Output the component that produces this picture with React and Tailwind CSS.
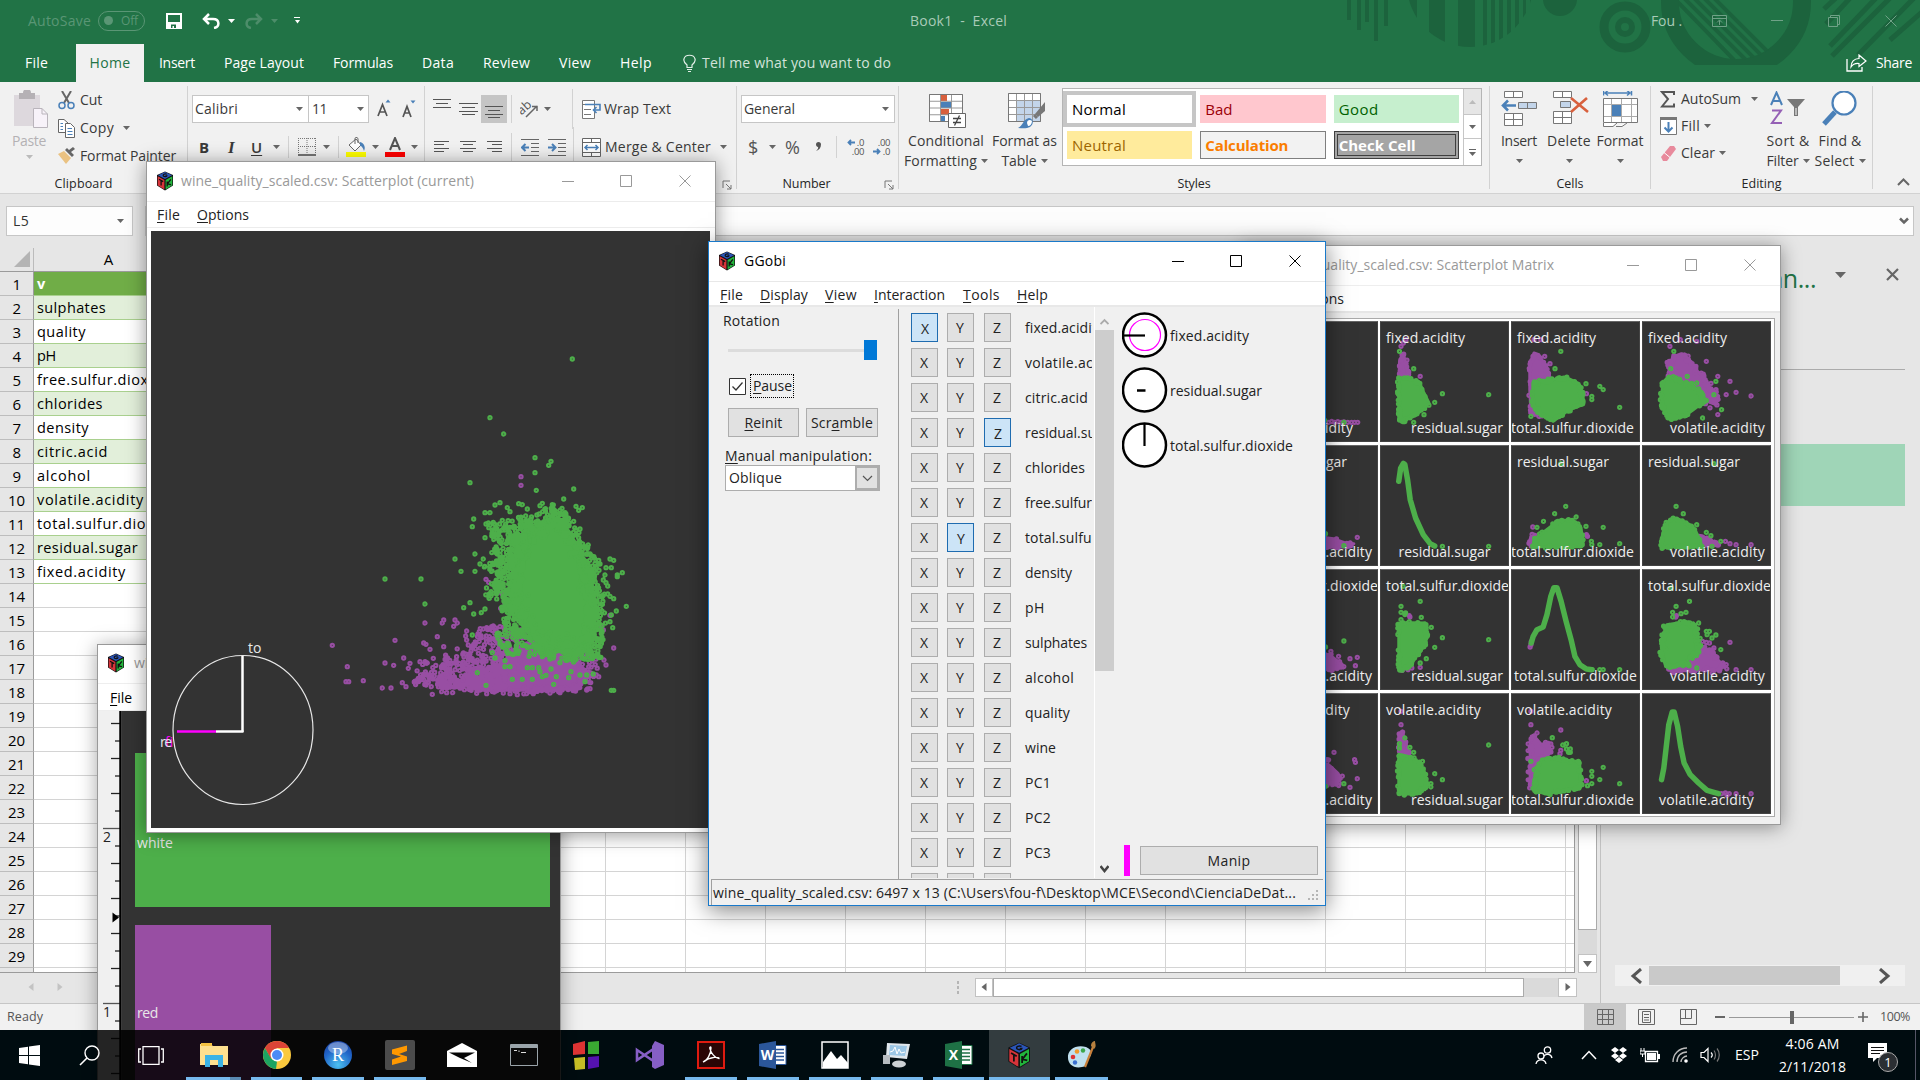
import React, { useLayoutEffect, useRef, useState } from "react";

/* ---------- text fitted to a given advance width ---------- */
function T({ w, children, className = "" }) {
  const ref = useRef(null);
  const [ls, setLs] = useState(0);
  const text = String(children);
  const i = text.indexOf("_^");
  useLayoutEffect(() => {
    const el = ref.current;
    el.style.letterSpacing = "0px";
    const n = el.textContent.length;
    const v = (w - el.getBoundingClientRect().width) / n;
    el.style.letterSpacing = v + "px";
    setLs(v);
  }, [w, text]);
  const body =
    i < 0 ? text : (
      <>
        {text.slice(0, i)}
        <span className="underline underline-offset-2">{text[i + 2]}</span>
        {text.slice(i + 3)}
      </>
    );
  return (
    <span className={"inline-block shrink-0 whitespace-pre " + className} style={{ width: w }}>
      <span ref={ref} style={{ letterSpacing: ls }}>{body}</span>
    </span>
  );
}

const Caret = ({ className = "ml-0 text-[#666]" }) => (
  <svg width="7" height="4" viewBox="0 0 7 4" className={"shrink-0 " + className}>
    <path d="M0 0H7L3.5 4Z" fill="currentColor" />
  </svg>
);
const Svg = ({ w, h, className = "", children }) => (
  <svg width={w} height={h} viewBox={`0 0 ${w} ${h}`} fill="none" className={"shrink-0 " + className}>
    {children}
  </svg>
);
const Sep = ({ className = "h-[34px]" }) => <div className={"w-px shrink-0 bg-[#d2d2d2] " + className} />;

function Cube({ size = 20, className = "" }) {
  return (
    <svg width={size * 0.9} height={size} viewBox="0 0 18 20" className={"shrink-0 " + className}>
      <path d="M9 0.5L17 4V14.5L9 19.5L1 14.5V4Z" fill="#111" />
      <path d="M9 1L16 4.2L9 8L2 4.2Z" fill="#2b55b8" />
      <path d="M1.7 5.2L8.4 8.9V18.4L1.7 14.2Z" fill="#d8343a" />
      <path d="M16.3 5.2L9.6 8.9V18.4L16.3 14.2Z" fill="#22b53c" />
      <path d="M10.8 3.2C9 2.4 6.3 3.4 7.4 5C8.4 6 11 5.8 11 4.8H9.4" stroke="#111" strokeWidth="1.1" fill="none" />
      <path d="M3 8.2L7.2 10.6M5.1 9.6V14.4" stroke="#111" strokeWidth="1.3" fill="none" />
      <path d="M11.2 10.4V15.6M14.8 8.4L11.4 12.8L15 13.6" stroke="#111" strokeWidth="1.3" fill="none" />
    </svg>
  );
}

/* ---------- header decoration ---------- */
function HeaderArt() {
  return (
    <svg width="620" height="82" viewBox="1300 0 620 82" className="absolute right-0 top-0" fill="#1c633d">
      <path d="M1347 0h4v20h-4zM1357 0h4v30h-4zM1365 0h4v22h-4zM1374 0h4v41h-4zM1384 0h4v26h-4z" />
      <clipPath id="disc"><circle cx="1470" cy="-16" r="63" /></clipPath>
      <g clipPath="url(#disc)">
        <path d="M1407 0h10v60h-10zM1429 0h16v60h-16zM1458 0h17v60h-17zM1483 0h4v60h-4zM1491 0h4v60h-4zM1499 0h4v60h-4zM1507 0h4v60h-4zM1515 0h4v60h-4zM1523 0h3v60h-3zM1530 0h3v60h-3z" />
      </g>
      <circle cx="1560" cy="-1" r="17" />
      <circle cx="1625" cy="27" r="21" fill="none" stroke="#1c633d" strokeWidth="9" />
      <circle cx="1625" cy="27" r="7" fill="none" stroke="#1c633d" strokeWidth="6" />
      <clipPath id="cutArc"><path d="M1600 0h300v65h-300z" /></clipPath>
      <g clipPath="url(#cutArc)">
        <circle cx="1736" cy="2" r="66" fill="none" stroke="#1c633d" strokeWidth="18" />
      </g>
      <clipPath id="innerArc"><circle cx="1736" cy="2" r="58" /></clipPath>
      <g clipPath="url(#innerArc)" stroke="#1c633d" strokeWidth="4">
        <path d="M1672 -4L1736 62M1682 -4L1748 62M1692 -4L1758 62M1702 -4L1768 62M1712 -4L1778 62" />
      </g>
      <g stroke="#1c633d" strokeWidth="5">
        <path d="M1838 -4L1824 9M1852 -4L1826 24M1878 -4L1830 46M1892 -4L1832 56M1916 -4L1858 55M1922 12L1890 40" />
      </g>
    </svg>
  );
}

/* ---------- Excel ribbon ---------- */
const Group = ({ w, label, lw, children, launcher, lp = "" }) => (
  <div className="flex h-[111px] shrink-0" style={{ width: w }}>
    <div className="min-w-0 flex-1">
      <div className="h-[92px]">{children}</div>
      <div className={"relative flex h-[20px] items-center justify-center pt-px text-[12.5px] text-[#262626] " + lp}>
        <T w={lw}>{label}</T>
        {launcher && (
          <Svg w={10} h={10} className="absolute right-[4px]">
            <path d="M1 8V1H8M4 4L9 9M9 5V9H5" stroke="#777" />
          </Svg>
        )}
      </div>
    </div>
    <Sep className="mt-1 h-[103px]" />
  </div>
);

const Big = ({ className, icon, a, aw, b, bw }) => (
  <div className={"flex shrink-0 flex-col items-center pt-[9px] " + className}>
    <div className="flex h-[38px] items-start justify-center">{icon}</div>
    <div className="mt-[2px] flex h-[20px] items-center"><T w={aw}>{a}</T></div>
    <div className="flex h-[20px] items-center">
      {b && <T w={bw}>{b}</T>}
      <Caret className={b ? "ml-[4px] text-[#666]" : "text-[#666]"} />
    </div>
  </div>
);

const Lines = ({ w, ys, xs }) => (
  <Svg w={w} h={18}>
    {ys.map((y, i) => (
      <path key={i} d={`M${xs[i][0]} ${y + 0.5}H${xs[i][1]}`} stroke="#555" />
    ))}
  </Svg>
);

function Ribbon() {
  const grid = (x, y, cw, ch, nx, ny) => {
    let d = "";
    for (let i = 0; i <= nx; i++) d += `M${x + i * cw} ${y}v${ch * ny}`;
    for (let j = 0; j <= ny; j++) d += `M${x} ${y + j * ch}h${cw * nx}`;
    return d;
  };
  return (
    <div className="flex h-[112px] shrink-0 border-b border-[#d2d2d2] bg-[#f1f1f1] text-[14px] text-[#3a3a3a]">
      <Group w={188} label="Clipboard" lw={58} lp="pr-[20px]">
        <div className="flex pt-[4px]">
          <div className="flex w-[58px] flex-col items-center pt-[4px] text-[#b4b1b4]">
            <Svg w={36} h={38} className="ml-[4px]">
              <path d="M1 5H27V36H1Z" fill="#ddd8dd" />
              <path d="M6 3h4a4 4 0 0 1 8 0h4v6H6z" fill="#b5b1b5" />
              <path d="M20.500 18.500H29L34.500 24V37.500H20.500Z" fill="#f7f2f9" stroke="#b9b4bb" />
              <path d="M29 18.500V24H34.500" stroke="#b9b4bb" />
            </Svg>
            <T w={34} className="mt-[6px]">Paste</T>
            <Caret className="mt-[7px] text-[#bbb]" />
          </div>
          <div>
            <div className="flex h-[28px] items-center">
              <Svg w={17} h={19}>
                <path d="M4 0L11 12M13 0L6 12" stroke="#666" strokeWidth="2" />
                <circle cx="4" cy="14.500" r="3" stroke="#4a80b8" strokeWidth="1.500" />
                <circle cx="13" cy="14.500" r="3" stroke="#4a80b8" strokeWidth="1.500" />
              </Svg>
              <T w={22} className="ml-[5px]">Cut</T>
            </div>
            <div className="flex h-[28px] items-center">
              <Svg w={17} h={19}>
                <path d="M0.500 0.500H6L10 4V13.500H0.500Z" stroke="#666" fill="#fff" />
                <path d="M7.500 4.500H12.500L16.500 8.500V18.500H7.500Z" stroke="#666" fill="#fff" />
                <path d="M2.500 4.500H5M2.500 7.500H5M2.500 10.500H5M9.500 9.500H14M9.500 12.500H14.500M9.500 15.500H14.500" stroke="#4a80b8" />
              </Svg>
              <T w={34} className="ml-[5px]">Copy</T>
              <Caret className="ml-[9px] text-[#666]" />
            </div>
            <div className="flex h-[28px] items-center">
              <Svg w={18} h={18}>
                <path d="M0 7L6 4L13 11L8 17Z" fill="#eac282" />
                <path d="M7 3L14 10L16 8L13 5L17 2L15 0L11 3L9 1Z" fill="#666" />
              </Svg>
              <T w={96} className="ml-[4px]">Format Painter</T>
            </div>
          </div>
        </div>
      </Group>

      <Group w={237} label="Font" lw={26} launcher>
        <div className="flex flex-col gap-[10px] pt-[13px]">
          <div className="flex h-[28px] items-center">
            <div className="ml-[4px] flex h-[28px] w-[117px] shrink-0 items-center border border-[#c6c6c6] bg-white pl-[2px]">
              <T w={43}>Calibri</T>
              <Caret className="ml-[58px] text-[#666]" />
            </div>
            <div className="-ml-px flex h-[28px] w-[61px] shrink-0 items-center border border-[#c6c6c6] bg-white pl-[3px]">
              <T w={15}>11</T>
              <Caret className="ml-[30px] text-[#666]" />
            </div>
            <Svg w={16} h={20} className="ml-[8px]">
              <path d="M1 17L5.500 5.500L10 17M2.500 13H8.500" stroke="#555" strokeWidth="1.700" />
              <path d="M8.500 3.500L11 0.500L13.500 3.500Z" fill="#4a80b8" />
            </Svg>
            <Svg w={16} h={20} className="ml-[9px]">
              <path d="M1 18L5 7.500L9 18M2.500 14H7.500" stroke="#555" strokeWidth="1.700" />
              <path d="M8.500 1.500L11 4.500L13.500 1.500Z" fill="#4a80b8" />
            </Svg>
          </div>
          <div className="flex h-[28px] items-center">
            <T w={10} className="ml-[11px] text-[15px] font-bold">B</T>
            <span className="ml-[19px] w-[9px] font-['Liberation_Serif',serif] text-[17px] font-bold italic">I</span>
            <span className="ml-[14px] w-[12px] text-[15px] font-semibold underline underline-offset-2">U</span>
            <Caret className="ml-[10px] text-[#666]" />
            <Sep className="ml-[8px] h-[22px]" />
            <Svg w={18} h={18} className="ml-[9px]">
              <path d="M0 0.500H18M0.500 0V16M17.500 0V16M9 0V16M0 8.500H18" stroke="#777" strokeDasharray="1 1" />
              <path d="M0 17H18" stroke="#555" strokeWidth="1.600" />
            </Svg>
            <Caret className="ml-[7px] text-[#666]" />
            <Sep className="ml-[8px] h-[22px]" />
            <Svg w={20} h={20} className="ml-[7px]">
              <path d="M3 8L10 2L15 8L9 14Z" fill="#fff" stroke="#666" />
              <path d="M9 7V1.500C9 0 12 0 12 2V6" stroke="#666" />
              <path d="M14 5C18 6 20 10 18 14C17 11 16 9 14 9Z" fill="#4a80b8" />
              <path d="M0 15H20V20H0Z" fill="#ff0" />
            </Svg>
            <Caret className="ml-[6px] text-[#666]" />
            <Svg w={20} h={20} className="ml-[6px]">
              <path d="M5 13L10 1L15 13M7 9H13" stroke="#555" strokeWidth="2" />
              <path d="M0 15H20V20H0Z" fill="#f00" />
            </Svg>
            <Caret className="ml-[6px] text-[#666]" />
          </div>
        </div>
      </Group>

      <Group w={312} label="Alignment" lw={60} launcher>
        <div className="flex flex-col gap-[10px] pt-[13px]">
          <div className="flex h-[28px] items-center">
            <div className="mb-[10px] ml-[8px]"><Lines w={18} ys={[4, 8, 12]} xs={[[0, 18], [3, 15], [0, 18]]} /></div>
            <div className="ml-[8px]"><Lines w={19} ys={[3, 7, 11, 14]} xs={[[0, 19], [3, 16], [0, 19], [3, 16]]} /></div>
            <div className="ml-[3px] flex h-[28px] w-[26px] items-center justify-center bg-[#c5c5c5] pt-[6px]">
              <Lines w={18} ys={[3, 7, 11, 14]} xs={[[0, 18], [3, 15], [0, 18], [3, 15]]} />
            </div>
            <Sep className="ml-[4px] h-[28px]" />
            <Svg w={19} h={18} className="ml-[8px]">
              <path d="M6 17L17 6M12 6.500H17V11" stroke="#666" strokeWidth="1.500" />
              <text x="-1" y="11" fontSize="12.500" fill="#555" transform="rotate(-42 6 10)" className="font-['Open_Sans',sans-serif]">ab</text>
            </Svg>
            <Caret className="ml-[5px] text-[#666]" />
            <Sep className="ml-[21px] h-[40px]" />
            <Svg w={20} h={19} className="ml-[9px]">
              <path d="M0.500 0.500H12.500V18.500H0.500Z" fill="#fff" stroke="#777" />
              <path d="M0 4.500H13M2 9.500H9M2 14.500H9" stroke="#777" />
              <path d="M3 4.500H18V10H12M14.500 7L11.500 10L14.500 13" stroke="#4a80b8" strokeWidth="1.600" />
            </Svg>
            <T w={67} className="ml-[2px]">Wrap Text</T>
          </div>
          <div className="flex h-[28px] items-center">
            <div className="ml-[9px]"><Lines w={15} ys={[3, 6, 10, 13]} xs={[[0, 15], [0, 10], [0, 15], [0, 10]]} /></div>
            <div className="ml-[11px]"><Lines w={16} ys={[3, 6, 10, 13]} xs={[[0, 16], [3, 13], [0, 16], [3, 13]]} /></div>
            <div className="ml-[11px]"><Lines w={15} ys={[3, 6, 10, 13]} xs={[[0, 15], [5, 15], [0, 15], [5, 15]]} /></div>
            <Sep className="ml-[9px] h-[28px]" />
            {[0, 1].map((k) => (
              <Svg key={k} w={18} h={17} className="ml-[9px]">
                <path d="M0 0.500H18M10 4.500H18M10 8.500H18M10 12.500H18M0 16.500H18" stroke="#666" />
                <path d={k ? "M0 8.500H7M4 5L7.500 8.500L4 12" : "M8 8.500H1M4.500 5L1 8.500L4.500 12"} stroke="#4a80b8" strokeWidth="2" />
              </Svg>
            ))}
            <Sep className="ml-[7px] h-[40px]" />
            <Svg w={19} h={19} className="ml-[8px]">
              <path d="M0.500 0.500H18.500V18.500H0.500ZM0 4.500H19M0 14.500H19M9.500 0V4M9.500 15V19" stroke="#666" fill="#fff" />
              <path d="M3 9.500H16M5.500 7L3 9.500L5.500 12M13.500 7L16 9.500L13.500 12" stroke="#4a80b8" strokeWidth="1.500" />
            </Svg>
            <T w={106} className="ml-[4px]">Merge &amp; Center</T>
            <Caret className="ml-[9px] text-[#666]" />
          </div>
        </div>
      </Group>

      <Group w={162} label="Number" lw={48} launcher lp="pr-[22px]">
        <div className="flex flex-col gap-[10px] pt-[13px]">
          <div className="ml-[4px] flex h-[28px] w-[154px] items-center border border-[#c6c6c6] bg-white pl-[2px]">
            <T w={51}>General</T>
            <Caret className="ml-[87px] text-[#666]" />
          </div>
          <div className="flex h-[28px] items-center text-[#555]">
            <T w={11} className="ml-[11px] text-[18px]">$</T>
            <Caret className="ml-[10px] text-[#666]" />
            <T w={16} className="ml-[9px] text-[18px]">%</T>
            <Svg w={7} h={12} className="ml-[14px]">
              <path d="M1 3.500a2.500 2.500 0 1 1 5 0C6 7 4 9 1 10C3 8 3.500 7 3 6C2 6 1 5 1 3.500" fill="#555" />
            </Svg>
            <Sep className="ml-[14px] h-[22px]" />
            <div className="ml-[10px] w-[17px] text-[9.5px] leading-[9px] tracking-[-0.4px]">
              <div className="flex items-center justify-between"><Svg w={8} h={7}><path d="M8 3.500H1.500M4 1L1.500 3.500L4 6" stroke="#4a80b8" strokeWidth="1.800" /></Svg>.0</div>
              <div className="text-right">.00</div>
            </div>
            <div className="ml-[9px] w-[17px] text-[9.5px] leading-[9px] tracking-[-0.4px]">
              <div className="text-right">.00</div>
              <div className="flex items-center justify-between"><Svg w={8} h={7}><path d="M0 3.500H6.500M4 1L6.500 3.500L4 6" stroke="#4a80b8" strokeWidth="1.800" /></Svg>.0</div>
            </div>
          </div>
        </div>
      </Group>

      <Group w={591} label="Styles" lw={33}>
        <div className="flex">
          <Big className="ml-[5px] w-[84px]" a="Conditional" aw={76} b="Formatting" bw={73}
            icon={
              <Svg w={38} h={36} className="ml-[4px] mt-[3px]">
                <path d="M0.500 0.500H33.500V27.500H0.500Z" fill="#fff" />
                <path d="M11 1h7v6h-7zM11 15h9v6h-9z" fill="#d8603d" />
                <path d="M11 8h11v6H11zM11 22h5v6h-5z" fill="#4a80b8" />
                <path d={grid(0.5, 0.5, 11, 6.75, 3, 4)} stroke="#999" />
                <path d="M0.500 0.500H33.500V27.500H0.500Z" stroke="#777" />
                <path d="M19.500 19.500H36.500V33.500H19.500Z" fill="#fff" stroke="#666" />
                <path d="M24 24.500H32M24 28.500H32M30.500 21.500L25.500 31.500" stroke="#444" strokeWidth="1.300" />
              </Svg>
            } />
          <Big className="ml-[4px] w-[65px]" a="Format as" aw={65} b="Table" bw={35}
            icon={
              <Svg w={38} h={37} className="ml-[5px] mt-[2px]">
                <path d="M0.500 0.500H32.500V28.500H0.500Z" fill="#fff" />
                <path d="M9 8H33V29H9Z" fill="#c3d5ea" />
                <path d={grid(0.5, 0.5, 8, 7, 4, 4)} stroke="#999" />
                <path d="M0.500 0.500H32.500V28.500H0.500Z" stroke="#777" />
                <path d="M37 9V18L30 24L27 21Z" fill="#777" />
                <path d="M26 22L29 25" stroke="#777" strokeWidth="3" />
                <path d="M10 35C15 33 15 26 21 25C26 26 26 31 22 34C18 36 14 35 10 35" fill="#4a80b8" />
                <path d="M19 30C19 27 22 26 24 28C24 31 22 33 20 33" fill="#fff" />
              </Svg>
            } />
          <div className="ml-[5px] mt-[6px] flex h-[78px] w-[420px] border border-[#b5b5b5] bg-white text-[15px]">
            <div className="grid w-[400px] shrink-0 grid-cols-3 gap-x-[8px] gap-y-[8px] px-[4px] py-[6px]">
              <div className="flex h-[28px] items-center bg-white pl-[5px] text-black outline-4 outline-[#c6c6c6]"><T w={54}>Normal</T></div>
              <div className="flex h-[28px] items-center bg-[#ffc7ce] pl-[5px] text-[#9c0006]"><T w={27}>Bad</T></div>
              <div className="flex h-[28px] items-center bg-[#c6efce] pl-[5px] text-[#006100]"><T w={40}>Good</T></div>
              <div className="flex h-[28px] items-center bg-[#ffeb9c] pl-[5px] text-[#9c6500]"><T w={54}>Neutral</T></div>
              <div className="flex h-[28px] items-center border border-[#7f7f7f] bg-[#f2f2f2] pl-[4px] font-bold text-[#fa7d00]"><T w={83}>Calculation</T></div>
              <div className="flex h-[28px] items-center border-4 border-double border-[#3f3f3f] bg-[#a5a5a5] pl-px font-bold text-white"><T w={77}>Check Cell</T></div>
            </div>
            <div className="flex flex-1 flex-col border-l border-[#c6c6c6]">
              <div className="flex h-[25px] items-center justify-center bg-[#e6e6e6]"><Caret className="rotate-180 text-[#bbb]" /></div>
              <div className="flex h-[25px] items-center justify-center border-y border-[#c6c6c6]"><Caret /></div>
              <div className="flex flex-1 flex-col items-center justify-center gap-[2px]"><div className="h-px w-[7px] bg-[#666]" /><Caret /></div>
            </div>
          </div>
        </div>
      </Group>

      <Group w={161} label="Cells" lw={27}>
        <div className="flex">
          <Big className="ml-[7px] w-[44px]" a="Insert" aw={36}
            icon={
              <Svg w={36} h={36}>
                <path d="M3.500 0.500H21.500V6.500H3.500ZM12.500 0V6M3.500 22.500H21.500V34.500H3.500ZM12.500 22V34M3 28.500H21" stroke="#777" fill="#fff" />
                <path d="M17.500 11.500H35.500V17.500H17.500ZM26.500 11V18" stroke="#777" fill="#c3d5ea" />
                <path d="M15 14.500H2M7 9.500L2 14.500L7 19.500" stroke="#4a80b8" strokeWidth="2.600" />
              </Svg>
            } />
          <Big className="ml-[5px] w-[46px]" a="Delete" aw={44}
            icon={
              <Svg w={36} h={36} className="ml-[3px]">
                <path d="M0.500 0.500H18.500V6.500H0.500ZM9.500 0V6M0.500 20.500H18.500V32.500H0.500ZM9.500 20V32M0 26.500H18" stroke="#777" fill="#fff" />
                <path d="M7.500 10.500H17.500V16.500H7.500Z" stroke="#777" fill="#c3d5ea" />
                <path d="M18 7L35 21M34 7L18 21" stroke="#d8603d" strokeWidth="2.600" />
              </Svg>
            } />
          <Big className="ml-[4px] w-[48px]" a="Format" aw={47}
            icon={
              <Svg w={35} h={38}>
                <path d="M0.500 -1V4.500M28.500 -1V4.500M2 2H27M5 -0.500L2 2L5 4.500M24 -0.500L27 2L24 4.500" stroke="#4a80b8" strokeWidth="1.500" />
                <path d="M0.500 7.500H34.500V31.500H0.500Z" fill="#fff" />
                <path d="M8.500 7V32M18.500 7V32M28.500 7V32M0 13.500H34M0 25.500H34" stroke="#aaa" />
                <path d="M0.500 7.500H34.500V31.500H0.500Z" stroke="#777" />
                <path d="M9 14H18V25H9Z" fill="#4a80b8" />
                <path d="M0.500 32V35.500H10L14 32M13 35.500H19L24 32" stroke="#777" fill="#fff" />
              </Svg>
            } />
        </div>
      </Group>

      <Group w={222} label="Editing" lw={40} lp="">
        <div className="flex">
          <div className="ml-[9px] w-[106px] pt-[4px]">
            <div className="flex h-[26px] items-center">
              <Svg w={16} h={17}><path d="M14 4V1H2L8 8L2 15.500H14V12.500" stroke="#555" strokeWidth="2" /></Svg>
              <T w={60} className="ml-[5px]">AutoSum</T>
              <Caret className="ml-[10px] text-[#666]" />
            </div>
            <div className="flex h-[28px] items-center">
              <Svg w={17} h={18}>
                <path d="M0.500 0.500H16.500V17.500H0.500Z" fill="#fff" stroke="#777" />
                <path d="M0 0H17V3H0Z" fill="#777" />
                <path d="M8.500 5V14M4.500 10.500L8.500 14.500L12.500 10.500" stroke="#4a80b8" strokeWidth="2" />
              </Svg>
              <T w={19} className="ml-[4px]">Fill</T>
              <Caret className="ml-[4px] text-[#666]" />
            </div>
            <div className="flex h-[26px] items-center">
              <Svg w={17} h={17}>
                <path d="M10 1H14L16 4L7 16H3L1 12Z" fill="#e88a9c" />
                <path d="M4 7.500L10 12.500" stroke="#fff" />
              </Svg>
              <T w={34} className="ml-[4px]">Clear</T>
              <Caret className="ml-[4px] text-[#666]" />
            </div>
          </div>
          <Big className="w-[44px]" a="Sort &amp;" aw={43} b="Filter" bw={32}
            icon={
              <Svg w={36} h={36}>
                <path d="M1 14L6.500 1.500L12 14M3 10H10" stroke="#4a80b8" strokeWidth="2" />
                <path d="M2 19.500H11L2 32H12" stroke="#9560b5" strokeWidth="2" />
                <path d="M17 8H35L28 16V25H24V16Z" fill="#777" />
                <path d="M26 17V24" stroke="#fff" />
              </Svg>
            } />
          <Big className="ml-[5px] w-[50px]" a="Find &amp;" aw={43} b="Select" bw={40}
            icon={
              <Svg w={36} h={36}>
                <circle cx="22" cy="12" r="11.500" stroke="#4a80b8" strokeWidth="2.200" fill="#fff" />
                <path d="M13 21L2 33" stroke="#4a80b8" strokeWidth="5" />
              </Svg>
            } />
        </div>
      </Group>
      <div className="flex flex-1 items-end justify-end pb-[6px] pr-[10px]">
        <Svg w={13} h={10}><path d="M1 8L6.500 2.500L12 8" stroke="#666" strokeWidth="2" /></Svg>
      </div>
    </div>
  );
}

function ExcelHeader() {
  return (
    <div className="relative h-[82px] shrink-0 bg-[#217346] text-[14px] text-white">
      <HeaderArt />
      <div className="relative flex h-[44px] items-center pb-[3px]">
        <T w={63} className="ml-[28px] pt-px text-[#5a9675]">AutoSave</T>
        <div className="ml-[7px] flex h-[20px] w-[47px] shrink-0 items-center rounded-full border border-[#5a9675] pl-[5px] text-[12px] text-[#5a9675]">
          <div className="h-[9px] w-[9px] rounded-full bg-[#5a9675]" />
          <T w={17} className="ml-[8px]">Off</T>
        </div>
        <Svg w={16} h={16} className="ml-[21px]">
          <path d="M1 1H15V15H1Z" stroke="#fff" strokeWidth="2" />
          <path d="M1 9H15V16H1Z" fill="#fff" />
          <path d="M5 11.500H10V15H5Z" fill="#217346" /><path d="M6.500 13H8V16H6.500Z" fill="#fff" />
        </Svg>
        <Svg w={18} h={16} className="ml-[20px]">
          <path d="M7 1L2 6L7 11M2 6H11C18 6 18 14 12 15" stroke="#fff" strokeWidth="2.500" />
        </Svg>
        <Caret className="ml-[8px] text-white" />
        <Svg w={18} h={16} className="ml-[10px]">
          <path d="M11 1L16 6L11 11M16 6H7C0 6 0 14 6 15" stroke="#4d8d6a" strokeWidth="2.500" />
        </Svg>
        <Caret className="ml-[8px] text-[#4d8d6a]" />
        <div className="ml-[16px] flex w-[6px] flex-col items-center gap-[2px]">
          <div className="h-px w-[6px] bg-white" />
          <Svg w={5} h={4}><path d="M0 0H5L2.500 3.500Z" fill="#fff" /></Svg>
        </div>
        <T w={97} className="ml-[610px] text-[#a9cbb8]">{"Book1  -  Excel"}</T>
        <T w={31} className="ml-[644px] text-[#a9cbb8]">Fou .</T>
        <Svg w={15} h={12} className="ml-[30px]">
          <path d="M0.500 0.500H14.500V11.500H0.500ZM0 3.500H15M7.500 10V5.500M5 7.500L7.500 5L10 7.500" stroke="#6fa287" />
        </Svg>
        <div className="ml-[44px] h-px w-[12px] bg-[#6fa287]" />
        <Svg w={12} h={12} className="ml-[45px]"><path d="M0.500 2.500H9.500V11.500H0.500ZM2.500 2V0.500H11.500V9.500H10" stroke="#6fa287" /></Svg>
        <Svg w={12} h={12} className="ml-[45px]"><path d="M0.500 0.500L11.500 11.500M11.500 0.500L0.500 11.500" stroke="#6fa287" /></Svg>
      </div>
      <div className="relative flex h-[38px] items-center">
        <T w={23} className="ml-[25px]">File</T>
        <div className="ml-[28px] flex h-[38px] w-[68px] shrink-0 items-center justify-center bg-[#f1f1f1] text-[#217346]"><T w={41}>Home</T></div>
        <T w={36} className="ml-[15px]">Insert</T>
        <T w={80} className="ml-[29px]">Page Layout</T>
        <T w={60} className="ml-[29px]">Formulas</T>
        <T w={32} className="ml-[29px]">Data</T>
        <T w={47} className="ml-[29px]">Review</T>
        <T w={32} className="ml-[29px]">View</T>
        <T w={32} className="ml-[29px]">Help</T>
        <Svg w={13} h={18} className="ml-[31px]">
          <path d="M4 13.500V11C1 8.500 0.500 6.500 1 5C2 0 11 0 12 5C12.500 6.500 12 8.500 9 11V13.500ZM4 15.500H9M5 17.500H8" stroke="#e3efe8" strokeWidth="1.200" />
        </Svg>
        <T w={189} className="ml-[6px] text-[#d3e3da]">Tell me what you want to do</T>
        <Svg w={21} h={18} className="ml-[955px]">
          <path d="M1 5V17H16V13" stroke="#fff" strokeWidth="1.300" />
          <path d="M13 1L20 7L13 12.500V9.500C9 9 7 10 5 13C5 8 8 4.500 13 4.500Z" stroke="#fff" strokeWidth="1.200" />
        </Svg>
        <T w={36} className="ml-[9px]">Share</T>
      </div>
    </div>
  );
}

/* ---------- Excel sheet ---------- */
const SHEET = [
  ["v", 8], ["sulphates", 69], ["quality", 49], ["pH", 19], ["free.sulfur.dioxide", 134], ["chlorides", 66], ["density", 52],
  ["citric.acid", 71], ["alcohol", 54], ["volatile.acidity", 107], ["total.sulfur.dioxide", 140], ["residual.sugar", 101], ["fixed.acidity", 89],
];

function Sheet() {
  const cols = Array.from({ length: 16 });
  return (
    <div className="flex h-[725px] w-[1575px] shrink-0 flex-col overflow-hidden border-b border-r border-[#9b9b9b] bg-white text-[15px] text-black">
      <div className="flex h-[24px] shrink-0 items-end border-b border-[#9b9b9b] bg-[#e6e6e6]">
        <div className="flex h-[24px] w-[34px] items-end justify-end border-r border-[#bbb] pb-[4px] pr-[3px]">
          <Svg w={16} h={16}><path d="M16 0V16H0Z" fill="#b4b4b4" /></Svg>
        </div>
        <div className="flex h-[24px] w-[150px] items-center justify-center border-r border-[#bbb] pt-px">A</div>
      </div>
      {Array.from({ length: 30 }).map((_, r) => {
        const d = SHEET[r];
        const fill = r === 0 ? "bg-[#70ad47] font-bold text-white border-[#a9d08e]" : d ? (r % 2 ? "bg-[#e2efda] border-[#a9d08e]" : "bg-white border-[#a9d08e]") : "border-[#d4d4d4] border-r";
        return (
          <div key={r} className="flex h-[24px] shrink-0">
            <div className="flex w-[34px] shrink-0 items-center justify-center border-b border-r border-b-[#bdbdbd] border-r-[#9b9b9b] bg-[#e6e6e6] pt-[2px]">
              <T w={r < 9 ? 8 : 17}>{r + 1}</T>
            </div>
            <div className={"flex w-[148px] shrink-0 items-center border-b pl-[3px] pt-[2px] text-[14.5px] " + fill}>{d && <T w={d[1]}>{d[0]}</T>}</div>
            <div className="w-[104px] shrink-0 border-b border-r border-[#d4d4d4]" />
            {cols.map((_, c) => <div key={c} className="w-[80px] shrink-0 border-b border-r border-[#d4d4d4]" />)}
            <div className="flex-1 border-b border-[#d4d4d4]" />
          </div>
        );
      })}
    </div>
  );
}

const Tri = ({ dir, color = "#666" }) => (
  <Svg w={6} h={8}><path d={dir === "l" ? "M5.500 0V8L0.500 4Z" : "M0.500 0V8L5.500 4Z"} fill={color} /></Svg>
);

function Excel() {
  return (
    <div className="flex h-[1030px] flex-col bg-[#e6e6e6]">
      <ExcelHeader />
      <Ribbon />
      <div className="flex h-[54px] shrink-0 pl-[6px] pt-[12px]">
        <div className="flex h-[30px] w-[127px] items-center border border-[#c6c6c6] bg-[#fdfdfd] pl-[6px] text-[14px] text-[#333]">
          <T w={16}>L5</T>
          <Caret className="ml-[88px] text-[#666]" />
        </div>
        <div className="ml-[12px] flex h-[30px] w-[1769px] items-center justify-end border border-[#c6c6c6] bg-[#fdfdfd] pr-[4px]">
          <Svg w={10} h={8}><path d="M1 1.500L5 5.500L9 1.500" stroke="#666" strokeWidth="2.500" /></Svg>
        </div>
      </div>
      <div className="flex h-[755px] shrink-0">
        <div className="flex w-[1601px] shrink-0 flex-col border-r border-[#c2c2c2]">
          <div className="flex">
            <Sheet />
            <div className="ml-[3px] flex h-[725px] w-[19px] flex-col bg-[#dadada]">
              <div className="h-[682px] border border-[#ababab] bg-white" />
              <div className="mt-auto flex h-[19px] items-center justify-center border border-[#c2c2c2] bg-white">
                <Svg w={9} h={6}><path d="M0 0H9L4.500 6Z" fill="#666" /></Svg>
              </div>
            </div>
          </div>
          <div className="flex h-[30px] items-center pb-[2px]">
            <div className="ml-[28px]"><Tri dir="l" color="#c3c3c3" /></div>
            <div className="ml-[23px]"><Tri dir="r" color="#c3c3c3" /></div>
            <div className="ml-[894px] flex w-[2px] flex-col gap-[2px]">
              <div className="h-[3px] bg-[#b5b5b5]" /><div className="h-[3px] bg-[#b5b5b5]" /><div className="h-[3px] bg-[#b5b5b5]" />
            </div>
            <div className="ml-[16px] flex h-[19px] w-[602px] bg-[#dadada]">
              <div className="flex w-[18px] items-center justify-center border border-[#c2c2c2] bg-white"><Tri dir="l" /></div>
              <div className="w-[531px] border border-[#ababab] bg-white" />
              <div className="ml-auto flex w-[19px] items-center justify-center border border-[#c2c2c2] bg-white"><Tri dir="r" /></div>
            </div>
          </div>
        </div>
        <div className="flex flex-1 flex-col pl-[14px] pr-[15px]">
          <div className="flex h-[122px] shrink-0 items-start justify-end border-b border-[#ababab] pt-[13px] text-[#217346]">
            <T w={200} className="text-[25px] leading-[34px]">Workbook Conn...</T>
            <Svg w={11} h={6} className="ml-[19px] mt-[11px]"><path d="M0 0H11L5.500 6Z" fill="#666" /></Svg>
            <Svg w={13} h={13} className="ml-[40px] mr-[6px] mt-[7px]"><path d="M1 1L12 12M12 1L1 12" stroke="#666" strokeWidth="2.200" /></Svg>
          </div>
          <div className="mt-[74px] h-[62px] bg-[#9fd5b7]" />
          <div className="mb-[17px] mt-auto flex h-[21px] items-center bg-[#f0f0f0] pl-[15px]">
            <Svg w={13} h={16}><path d="M11 1L3 8L11 15" stroke="#555" strokeWidth="3" /></Svg>
            <div className="ml-[6px] h-[19px] w-[191px] bg-[#c9c9c9]" />
            <Svg w={13} h={16} className="ml-[38px]"><path d="M2 1L10 8L2 15" stroke="#555" strokeWidth="3" /></Svg>
          </div>
        </div>
      </div>
      <div className="flex flex-1 items-center border-t border-[#c6c6c6] bg-[#f1f1f1] text-[12.5px] text-[#555]">
        <T w={36} className="ml-[7px]">Ready</T>
        <div className="ml-auto flex h-full w-[42px] items-center justify-center bg-[#c9c9c9]">
          <Svg w={17} h={16}><path d="M0.500 0.500H16.500V15.500H0.500ZM5.500 0V16M11.500 0V16M0 5.500H17M0 10.500H17" stroke="#666" /></Svg>
        </div>
        <Svg w={17} h={16} className="ml-[12px]"><path d="M0.500 0.500H16.500V15.500H0.500ZM4.500 2.500H12.500V13.500H4.500ZM6 5.500H11M6 8.500H11M6 11H11" stroke="#666" /></Svg>
        <Svg w={17} h={16} className="ml-[25px]"><path d="M0.500 0.500H16.500V15.500H0.500ZM0 9.500H11.500V0M5.500 0V9" stroke="#666" /></Svg>
        <div className="ml-[18px] h-[2px] w-[10px] bg-[#666]" />
        <div className="ml-[4px] flex w-[125px] items-center">
          <div className="h-px w-[61px] bg-[#999]" /><div className="h-[13px] w-[4px] bg-[#666]" /><div className="h-px flex-1 bg-[#999]" />
        </div>
        <Svg w={10} h={10} className="ml-[4px]"><path d="M5 0V10M0 5H10" stroke="#666" strokeWidth="1.600" /></Svg>
        <T w={30} className="ml-[12px] mr-[10px]">100%</T>
      </div>
    </div>
  );
}

/* ---------- plots ---------- */
const GREEN = "#4daf4a";
const PURPLE = "#984ea3";
const rng = (s) => () => {
  s = (s + 0x6d2b79f5) | 0;
  let t = Math.imul(s ^ (s >>> 15), 1 | s);
  t = (t + Math.imul(t ^ (t >>> 7), 61 | t)) ^ t;
  return ((t ^ (t >>> 14)) >>> 0) / 4294967296;
};
const pairs = (s) => s.trim().split(/\s+/).map((p) => p.split(",").map(Number));
const ring = ([x, y]) => `M${(x - 1.6).toFixed(1)} ${y.toFixed(1)}a1.6 1.6 0 1 0 3.2 0a1.6 1.6 0 1 0 -3.2 0`;
const edge = (poly, n, spread, rand) => {
  const out = [];
  const seg = poly.map((p, i) => {
    const q = poly[(i + 1) % poly.length];
    return [p, q, Math.hypot(q[0] - p[0], q[1] - p[1])];
  });
  const total = seg.reduce((a, s) => a + s[2], 0);
  for (let i = 0; i < n; i++) {
    let t = rand() * total;
    const s = seg.find((g) => (t -= g[2]) < 0) || seg[0];
    const f = rand();
    const g = () => (rand() + rand() + rand() - 1.5) * spread;
    out.push([s[0][0] + (s[1][0] - s[0][0]) * f + g(), s[0][1] + (s[1][1] - s[0][1]) * f + g()]);
  }
  return out;
};
const inside = (p, poly) => {
  let c = false;
  for (let i = 0, j = poly.length - 1; i < poly.length; j = i++) {
    const [xi, yi] = poly[i], [xj, yj] = poly[j];
    if (yi > p[1] !== yj > p[1] && p[0] < ((xj - xi) * (p[1] - yi)) / (yj - yi) + xi) c = !c;
  }
  return c;
};
const fillPts = (poly, n, rand) => {
  const xs = poly.map((p) => p[0]), ys = poly.map((p) => p[1]);
  const x0 = Math.min(...xs), x1 = Math.max(...xs), y0 = Math.min(...ys), y1 = Math.max(...ys);
  const out = [];
  for (let i = 0; i < n * 4 && out.length < n; i++) {
    const p = [x0 + rand() * (x1 - x0), y0 + rand() * (y1 - y0)];
    if (inside(p, poly)) out.push(p);
  }
  return out;
};

function Layers({ layers, map, seed }) {
  const rand = rng(seed);
  return layers.map((l, i) => {
    const conv = (s) => pairs(s).map(map);
    if (l.curve) {
      return <polyline key={i} points={conv(l.curve).map((p) => p.join(",")).join(" ")} fill="none" stroke={l.c} strokeWidth="5.500" strokeLinejoin="round" strokeLinecap="round" />;
    }
    const poly = l.poly && conv(l.poly);
    let pts = l.pts ? conv(l.pts) : [];
    if (poly && l.n) pts = pts.concat(edge(poly, l.n, l.s || 1.8, rand));
    if (l.sparse) pts = pts.concat(fillPts(conv(l.sparse), l.m, rand));
    return (
      <g key={i}>
        {poly && <polygon points={poly.map((p) => p.join(",")).join(" ")} fill={l.c} stroke={l.c} strokeWidth="3" strokeLinejoin="round" />}
        <path d={pts.map(ring).join("")} fill="none" stroke={l.c} strokeWidth="2.100" />
      </g>
    );
  });
}

const G = GREEN, P = PURPLE;
const MAIN = [
  { c: P, poly: "465,1076 450,1066 480,1052 530,1020 560,990 600,955 640,935 760,975 785,1015 790,1045 765,1076 600,1081 483,1081", n: 120, s: 3,
    pts: "37,946 82,1010 78,1055 86,1055 130,1052 187,1074 213,1074 195,999 225,931 221,1006 251,984 247,1058 258,1070 315,879 371,870 367,879 405,870 412,879 401,889 352,920 371,950 311,939 318,943 330,958 337,1093 603,440 603,466 870,856 881,954 850,900 842,888 858,1005 852,990 836,1040 829,1035 498,748 506,757 536,775 545,790 555,820 542,835 300,995 322,999 270,1000 265,1015 340,985 470,1090 500,1091 570,1091 592,1094 640,1091 690,1089 720,1088 550,1089 620,1091 380,1088 398,1088 365,1085 810,1076 800,1080 478,905 490,897 500,893 508,897 515,890 440,903 437,918 440,930 445,945" },
  { c: P, sparse: "460,935 480,895 530,885 600,890 640,960 560,1040 430,1060 420,990", m: 190 },
  { c: P, sparse: "345,1060 365,1030 410,1040 440,1020 560,1000 560,1082 440,1082 360,1072", m: 190 },
  { c: P, sparse: "275,1050 340,1010 365,975 385,975 400,1075 350,1072 290,1068", m: 60 },
  { c: P, sparse: "370,985 410,955 460,960 440,1050 380,1060", m: 30 },
  { c: P, sparse: "255,1000 340,990 330,1070 290,1070", m: 16 },
  { c: P, sparse: "770,960 830,960 835,1035 815,1078 780,1078", m: 40 },
  { c: G, poly: "600,615 635,595 680,570 720,570 748,605 770,645 795,690 815,740 820,800 826,860 817,915 790,955 762,972 700,962 650,935 615,900 592,860 578,800 585,740 590,680", n: 420, s: 12,
    pts: "757,87 510,263 551,312 645,383 693,394 686,406 645,428 450,458 649,481 761,477 731,507 540,518 525,525 596,521 607,524 562,533 570,545 495,548 510,548 622,537 667,520 660,527 697,524 768,529 787,533 776,541 461,567 457,590 498,582 517,600 495,623 528,615 547,571 547,600 761,574 780,597 772,616 465,672 405,687 423,724 465,724 480,702 490,687 195,747 303,747 315,822 431,833 450,818 461,852 484,848 495,837 870,687 881,691 836,691 840,702 858,713 874,713 907,728 892,735 892,740 919,829 889,843 874,855 870,875 878,893 863,792 870,799 881,806 832,776 858,758 457,915 472,1028 498,1066 577,1048 607,1048 637,1048 701,1063 746,1043 753,1025 780,1035 800,1035 820,1032 795,1055 874,1081 881,1081 555,992 555,1010 570,1010 622,1013 637,1013 656,1013 660,1025 690,987 720,998 738,991 678,1036 667,1040 709,1040 693,1017 517,968 525,984 532,910 805,645 810,672 855,735 850,750 863,768" },
  { c: G, sparse: "495,575 545,575 590,560 640,550 700,525 745,545 740,600 640,640 590,700 590,860 545,870 540,820 495,800 500,770 540,740 490,710 525,650", m: 300 },
  { c: G, sparse: "560,620 620,590 600,860 560,850 575,740", m: 120 },
  { c: G, sparse: "760,635 800,635 805,700 845,760 850,800 850,940 830,990 790,990 770,960 800,860", m: 180 },
  { c: G, sparse: "530,880 590,860 640,930 760,965 830,930 845,990 740,990 620,980 560,970 525,940", m: 110 },
];

const MATRIX = [
  [
    { lt: "", lb: "fixed.acidity", bw: 79, diag: true, L: [{ c: P, pts: "10,545 22,548 30,545 38,548 46,546 55,548 62,547 72,548 82,548 90,548 98,548" }, { c: G, pts: "12,542 62,548" }] },
    { lt: "fixed.acidity", tw: 79, lb: "residual.sugar", bw: 92, L: [
      { c: P, poly: "207,405 208,365 218,342 226,380 232,410", n: 20, pts: "212,320 218,310 225,300 262,410" },
      { c: G, poly: "206,415 225,414 260,428 272,460 285,490 268,512 240,530 218,547 206,537", n: 50, s: 1.4, pts: "208,335 245,387 320,462 441,465 300,488 272,525 245,548" }] },
    { lt: "fixed.acidity", tw: 79, lb: "total.sulfur.dioxide", bw: 123, L: [
      { c: P, poly: "549,375 560,340 573,345 588,375 602,412 575,430 565,520 582,530 552,518 549,450", n: 40, pts: "697,462 588,350 602,372 560,300 578,300" },
      { c: G, poly: "557,430 600,422 645,414 678,432 688,470 688,495 650,512 610,545 572,518 557,490", n: 70, pts: "630,335 615,387 696,432 732,440 741,450 711,470 711,480 784,503 552,530" }] },
    { lt: "fixed.acidity", tw: 79, lb: "volatile.acidity", bw: 95, L: [
      { c: P, poly: "922,352 945,342 965,358 982,388 1003,415 1020,445 1040,475 1035,495 1000,480 930,420 912,395", n: 90, s: 4, pts: "915,320 1010,365 1072,425 1088,458 1127,469 1040,410 1040,525 985,305 942,300 1062,465" },
      { c: G, poly: "896,430 912,409 935,422 970,435 998,460 1005,485 982,505 958,525 918,541 902,518 893,480", n: 70, pts: "925,335 917,387 1050,510 1030,465 1035,425 1000,535 985,430 960,410" }] },
  ],
  [
    { lt: "residual.sugar", tw: 92, lb: "fixed.acidity", bw: 79, L: [{ c: P, poly: "0,892 35,897 65,910 88,912 70,922 0,922", n: 25, pts: "97,893" }, { c: G, pts: "14,882 62,918" }] },
    { lt: "", lb: "residual.sugar", bw: 92, diag: true, L: [{ c: G, curve: "206,725 211,685 218,671 222,675 229,720 236,780 250,835 270,885 288,912 300,919" }, { c: G, pts: "320,920 441,920" }] },
    { lt: "residual.sugar", tw: 92, lb: "total.sulfur.dioxide", bw: 123, L: [
      { c: P, poly: "550,922 552,897 562,884 575,920", n: 12, pts: "557,862 700,890 697,885" },
      { c: G, poly: "557,921 567,893 600,864 625,842 660,842 683,864 687,900 685,921", n: 50, s: 1.3, pts: "643,800 614,822 585,845 568,863 670,832 696,860 741,863 784,912 710,905 711,915 732,915 630,672" }] },
    { lt: "residual.sugar", tw: 92, lb: "volatile.acidity", bw: 95, L: [
      { c: P, poly: "990,892 1030,907 1045,916 1000,920", n: 22, pts: "1060,905 1088,915 1127,915 1072,912" },
      { c: G, poly: "892,921 896,880 907,851 925,836 948,844 976,862 994,900 998,921", n: 45, s: 1.3, pts: "931,800 950,822 985,855 1010,878 1022,888 1048,905 1025,920 1030,672" }] },
  ],
  [
    { lt: "total.sulfur.dioxide", tw: 123, lb: "fixed.acidity", bw: 79, L: [{ c: P, poly: "0,275 30,290 48,307 60,325 0,330", n: 30, pts: "48,290 78,297 97,293 92,318 28,275" }, { c: G, pts: "62,244 14,262" }] },
    { lt: "total.sulfur.dioxide", tw: 123, lb: "residual.sugar", bw: 92, L: [
      { c: P, pts: "235,172 233,168 230,330 240,325 262,323 215,332" },
      { c: G, poly: "206,330 206,192 240,189 275,190 280,235 270,262 252,290 238,315 212,331", n: 55, s: 1.3, pts: "262,125 212,140 212,158 224,160 222,165 265,173 291,203 320,234 441,240 300,263 278,297 262,310 217,80 212,180" }] },
    { lt: "", lb: "total.sulfur.dioxide", bw: 123, diag: true, L: [
      { c: P, pts: "550,262 552,255 553,246" },
      { c: G, curve: "553,250 558,230 568,210 584,202 594,165 604,110 612,84 620,84 631,125 644,185 657,240 667,290 680,315 697,328 712,330" },
      { c: G, pts: "732,330 741,330 784,330" }] },
    { lt: "total.sulfur.dioxide", tw: 123, lb: "volatile.acidity", bw: 95, L: [
      { c: P, poly: "910,330 960,300 1003,268 1028,275 1036,295 1055,318 1045,331 930,331", n: 60, s: 3, pts: "930,172 932,168 1000,245 1018,250 1072,248 1088,330 1127,330 1062,315 1010,248 1030,265" },
      { c: G, poly: "893,250 907,195 940,189 982,195 988,230 990,270 960,303 930,321 904,321 896,290", n: 75, s: 2.5, pts: "966,125 931,140 922,158 957,158 944,162 922,172 990,190 1018,215 1012,225 1035,226 1025,235 1010,215 1048,270 918,85 985,325 965,318" }] },
  ],
  [
    { lt: "volatile.acidity", tw: 95, lb: "fixed.acidity", bw: 79, L: [{ c: P, poly: "0,607 24,617 46,640 55,658 38,670 0,670", n: 40, s: 3, pts: "36,578 90,600 92,608 97,657 78,683 18,600" }, { c: G, pts: "62,672 14,680" }] },
    { lt: "volatile.acidity", tw: 95, lb: "residual.sugar", bw: 92, L: [
      { c: P, poly: "208,575 210,520 215,514 223,545 233,585", n: 25, pts: "212,495 212,455" },
      { c: G, poly: "206,703 206,584 240,593 260,611 274,640 280,668 274,688 240,703", n: 45, s: 1.3, pts: "222,535 208,552 208,565 235,563 245,578 268,605 300,642 320,660 441,556 290,672 290,682" }] },
    { lt: "volatile.acidity", tw: 95, lb: "total.sulfur.dioxide", bw: 123, L: [
      { c: P, poly: "550,680 550,545 560,529 580,555 596,549 602,580 575,600 565,688", n: 55, s: 3, pts: "552,495 630,511 607,563 630,572 628,582 568,520 697,663 552,455" },
      { c: G, poly: "559,690 570,627 580,598 620,595 660,605 679,605 681,640 682,683 640,692 590,703", n: 55, s: 1.3, pts: "608,534 645,552 635,556 655,568 650,578 655,578 645,568 711,635 741,623 732,660 784,672 711,650 711,672 700,678 552,605 561,630" }] },
    { lt: "", lb: "volatile.acidity", bw: 95, diag: true, L: [
      { c: P, pts: "1050,702 1060,700 1064,706 1070,702 1088,702 1127,702" },
      { c: G, curve: "893,660 899,625 905,565 912,495 921,457 926,457 935,500 943,560 952,610 968,645 990,670 1012,692 1030,698 1042,702" }] },
  ],
];
const COLX = [-186, 157, 500, 842];
const ROWY = [244, 616, 28, 400];

/* ---------- window chrome ---------- */
function TitleBar({ title, w, active, ml = "ml-[7px]", h = "h-[40px]" }) {
  const c = active ? "#000" : "#999";
  return (
    <div className={"flex shrink-0 items-center bg-white pb-[2px] pl-[9px] text-[14px] " + h + (active ? " text-black" : " text-[#999]")}>
      <Cube size={20} />
      <T w={w} className={ml}>{title}</T>
      <div className="ml-auto flex items-center pr-[24px]">
        <Svg w={12} h={12}><path d="M0 6.500H12" stroke={c} /></Svg>
        <Svg w={12} h={12} className="ml-[46px]"><path d="M0.500 0.500H11.500V11.500H0.500Z" stroke={c} /></Svg>
        <Svg w={12} h={12} className="ml-[47px]"><path d="M0.500 0.500L11.500 11.500M11.500 0.500L0.500 11.500" stroke={c} /></Svg>
      </div>
    </div>
  );
}

function BarchartWindow() {
  const ticks = Array.from({ length: 21 }).map((_, i) => ({ y: 12.5 + i * 17.5, m: i % 2 === 0, big: i === 6 || i === 16 }));
  return (
    <div className="absolute left-[97px] top-[644px] flex h-[480px] w-[464px] flex-col border border-[#999] bg-white shadow-[0_2px_18px_rgba(0,0,0,0.35)]">
      <TitleBar title="wine_quality_scaled.csv: Barchart (current)" w={275} h="h-[38px]" ml="ml-[9px]" />
      <div className="flex h-[28px] shrink-0 items-center border-y border-[#eee] pl-[12px] pt-[2px] text-[14px]"><T w={22}>_^File</T></div>
      <div className="flex flex-1 bg-[#333]">
        <Svg w={24} h={414} className="bg-[#f0f0f0]">
          {ticks.map((t, i) => <path key={i} d={`M${t.big ? 5 : t.m ? 13 : 17} ${t.y}H22`} stroke={t.big ? "#555" : "#222"} strokeWidth="1.300" />)}
          <path d="M22.500 0V414" stroke="#000" strokeWidth="2.500" />
          <path d="M14.500 201.500V211.500L21 206.500Z" fill="#000" />
          <text x="5" y="131" fontSize="14" fill="#222" className="font-['Open_Sans',sans-serif]">2</text>
          <text x="5" y="306" fontSize="14" fill="#222" className="font-['Open_Sans',sans-serif]">1</text>
        </Svg>
        <div className="flex flex-1 flex-col gap-[18px] pl-[13px] pt-[42px] text-[14px] text-[#e8e8e8]">
          <div className="flex h-[154px] w-[415px] shrink-0 items-center bg-[#4daf4a] pl-[2px] pt-[25px]"><T w={36}>white</T></div>
          <div className="flex h-[200px] w-[136px] shrink-0 items-start bg-[#984ea3] pl-[2px] pt-[81px]"><T w={21}>red</T></div>
        </div>
      </div>
    </div>
  );
}

function ScatterWindow() {
  return (
    <div className="absolute left-[146px] top-[161px] flex h-[672px] w-[570px] flex-col border border-[#9a9a9a] bg-white shadow-[0_2px_18px_rgba(0,0,0,0.4)]">
      <TitleBar title="wine_quality_scaled.csv: Scatterplot (current)" w={293} h="h-[39px]" />
      <div className="flex h-[27px] shrink-0 items-center border-y border-[#ececec] pl-[10px] text-[14px] text-[#222]">
        <T w={23}>_^File</T>
        <T w={52} className="ml-[17px]">_^Options</T>
      </div>
      <div className="mx-[4px] mt-[3px] h-[597px] w-[559px] bg-[#333]">
        <svg width="559" height="597" viewBox="151 231 559 597" className="block">
          <Layers layers={MAIN} seed={7} map={([x, y]) => [320 + x / 3, 330 + y / 3]} />
          <ellipse cx="243" cy="730" rx="70" ry="74.500" fill="none" stroke="#e8e8e8" strokeWidth="1.200" />
          <path d="M242.500 656V732" stroke="#fff" strokeWidth="2.500" />
          <path d="M216 731.500H243.500" stroke="#fff" strokeWidth="2.500" />
          <path d="M177 731.500H216" stroke="#f0f" strokeWidth="2.500" />
          <g fontSize="14" className="font-['Open_Sans',sans-serif]">
            <text x="248" y="653" fill="#e8e8e8">to</text>
            <text x="165" y="747" fill="#f0f">fi</text>
            <text x="160" y="747" fill="#e8e8e8" textLength="12">re</text>
          </g>
        </svg>
      </div>
    </div>
  );
}

function MatrixWindow() {
  return (
    <div className="absolute left-[1241px] top-[245px] flex h-[580px] w-[540px] flex-col border border-[#9a9a9a] bg-[#f0f0f0] shadow-[0_2px_18px_rgba(0,0,0,0.4)]">
      <TitleBar title="wine_quality_scaled.csv: Scatterplot Matrix" w={278} h="h-[39px]" />
      <div className="flex h-[28px] shrink-0 items-center border-b-2 border-t border-b-[#e6e6e6] border-t-[#eee] bg-white pl-[10px] pt-px text-[14px] text-[#222]">
        <T w={23}>_^File</T>
        <T w={52} className="ml-[17px]">_^Options</T>
      </div>
      <div className="ml-[4px] mt-[5px] grid w-[529px] grid-cols-[repeat(4,129px)] gap-x-[2px] gap-y-[3px] border border-[#aaa] bg-white p-[2px]">
        {MATRIX.flatMap((row, r) =>
          row.map((cell, c) => (
            <div key={r + "-" + c} className="relative h-[121px] overflow-hidden border border-x-[#444] border-b-[#444] border-t-[#666] bg-[#333] text-[14px] text-[#eee]">
              <svg width="129" height="121" viewBox="0 0 129 121" className="absolute -left-px -top-px">
                <Layers layers={cell.L} seed={r * 10 + c + 3} map={([x, y]) => [(x - COLX[c]) / 2.613, (y - ROWY[r]) / 3]} />
              </svg>
              <div className="relative flex h-full flex-col justify-between pb-[3px] pt-[6px] leading-[20px]">
                <div className="pl-[5px]">{cell.lt && <T w={cell.tw}>{cell.lt}</T>}</div>
                <div className={"flex " + (cell.diag ? "justify-center" : cell.bw > 110 ? "-ml-px" : "justify-end pr-[5px]")}><T w={cell.bw}>{cell.lb}</T></div>
              </div>
            </div>
          ))
        )}
      </div>
    </div>
  );
}

/* ---------- GGobi control window ---------- */
const VARS = [
  ["fixed.acidity", 79, "X"], ["volatile.acidity", 97], ["citric.acid", 63], ["residual.sugar", 92, "Z"], ["chlorides", 60],
  ["free.sulfur.dioxide", 118], ["total.sulfur.dioxide", 125, "Y"], ["density", 47], ["pH", 20], ["sulphates", 62], ["alcohol", 49],
  ["quality", 45], ["wine", 31], ["PC1", 26], ["PC2", 26], ["PC3", 26], ["PC4", 26],
];

function GGobi() {
  const btn = "flex items-center justify-center border border-[#adadad] bg-[#e1e1e1]";
  return (
    <div className="absolute left-[708px] top-[241px] flex h-[665px] w-[618px] flex-col border border-[#1979ca] bg-[#f0f0f0] text-[14px] text-[#222] shadow-[0_4px_22px_rgba(0,0,0,0.5)]">
      <TitleBar title="GGobi" w={42} active h="h-[39px]" ml="ml-[8px]" />
      <div className="flex h-[26px] shrink-0 items-center border-b-2 border-t border-[#e8e8e8] bg-white pl-[11px] pt-[2px]">
        <T w={23}>_^File</T>
        <T w={48} className="ml-[17px]">_^Display</T>
        <T w={32} className="ml-[17px]">_^View</T>
        <T w={71} className="ml-[17px]">_^Interaction</T>
        <T w={37} className="ml-[18px]">_^Tools</T>
        <T w={31} className="ml-[17px]">_^Help</T>
      </div>
      <div className="flex h-[572px] shrink-0">
        <div className="mt-[2px] flex w-[190px] shrink-0 flex-col border-r border-[#a0a0a0] pl-[16px]">
          <T w={57} className="-ml-[2px] mt-[2px] leading-[20px]">Rotation</T>
          <div className="mt-[9px] flex h-[20px] items-center pl-[3px]">
            <div className="h-[3px] w-[136px] bg-[#dcdcdc]" /><div className="h-[20px] w-[13px] bg-[#0078d7]" />
          </div>
          <div className="mt-[14px] flex items-center pl-[4px]">
            <Svg w={17} h={17}><path d="M0.500 0.500H16.500V16.500H0.500Z" fill="#fff" stroke="#333" /><path d="M3.500 8.500L7 12L13.500 4.500" stroke="#333" strokeWidth="1.300" /></Svg>
            <div className="ml-[4px] flex h-[24px] w-[44px] items-center border border-dotted border-black pl-[2px]"><T w={39}>_^Pause</T></div>
          </div>
          <div className="mt-[10px] flex gap-[7px] pl-[3px]">
            <div className={btn + " h-[29px] w-[71px]"}><T w={38}>_^Reinit</T></div>
            <div className={btn + " h-[29px] w-[72px]"}><T w={62}>Scr_^amble</T></div>
          </div>
          <T w={147} className="mt-[9px] leading-[20px]">_^Manual manipulation:</T>
          <div className="-mt-px flex h-[26px] w-[155px] border border-[#adadad] bg-white pl-[3px]">
            <T w={53} className="leading-[24px]">Oblique</T>
            <div className="ml-auto flex w-[24px] items-center justify-center border-2 border-[#adadad] bg-[#e1e1e1]">
              <Svg w={11} h={7}><path d="M1 1L5.500 5.500L10 1" stroke="#555" strokeWidth="1.200" /></Svg>
            </div>
          </div>
        </div>
        <div className="h-[571px] w-[196px] shrink-0 border-r border-white pr-[2px]">
          <div className="flex h-full flex-col gap-[6px] overflow-hidden pl-[12px] pt-[6px]">
            {VARS.map(([v, w, on]) => (
              <div key={v} className="flex h-[29px] shrink-0 items-center gap-[9px]">
                {["X", "Y", "Z"].map((k) => (
                  <div key={k} className={"flex h-[29px] w-[27px] shrink-0 items-center justify-center border " + (k === "Z" ? "ml-px " : "") + (on === k ? "border-[#1f6cb0] bg-[#cce4f7] pl-[2px] pt-[2px]" : "border-[#adadad] bg-[#e1e1e1] pt-px")}>
                    <T w={9}>{k}</T>
                  </div>
                ))}
                <T w={w} className="ml-[5px]">{v}</T>
              </div>
            ))}
          </div>
        </div>
        <div className="flex w-[18px] shrink-0 flex-col items-center pt-[11px]">
          <Svg w={9} h={7}><path d="M0.500 6L4.500 2L8.500 6" stroke="#aaa" strokeWidth="1.800" /></Svg>
          <div className="mt-[5px] h-[341px] w-[19px] bg-[#cdcdcd]" />
          <Svg w={9} h={8} className="mb-[6px] mt-auto"><path d="M0.500 1L4.500 6L8.500 1" stroke="#444" strokeWidth="2.500" /></Svg>
        </div>
        <div className="flex flex-1 flex-col pl-[9px]">
          {[["fixed.acidity", 79], ["residual.sugar", 92], ["total.sulfur.dioxide", 123]].map(([v, w], i) => (
            <div key={v} className="flex h-[55px] items-center pt-[1px]">
              <Svg w={46} h={48}>
                <circle cx="22.500" cy="24" r="21.500" fill="#fff" stroke="#000" strokeWidth="2.500" />
                {i === 0 && <><circle cx="23" cy="24" r="15.500" stroke="#f0f" strokeWidth="1.200" /><path d="M2 24.500H23" stroke="#000" strokeWidth="2.200" /></>}
                {i === 1 && <path d="M15 24.500H23.500" stroke="#000" strokeWidth="2.500" />}
                {i === 2 && <path d="M22.500 2V25" stroke="#000" strokeWidth="2.200" />}
              </Svg>
              <T w={w} className="ml-[2px] pt-px">{v}</T>
            </div>
          ))}
          <div className="mb-[3px] mt-auto flex items-center pl-[2px]">
            <div className="h-[31px] w-[6px] bg-[#f0f]" />
            <div className={btn + " ml-[10px] h-[29px] w-[178px]"}><T w={43}>Manip</T></div>
          </div>
        </div>
      </div>
      <div className="mx-[2px] flex flex-1 items-center border-l border-t border-[#a0a0a0] pl-px">
        <T w={583}>{"wine_quality_scaled.csv: 6497 x 13 (C:\\Users\\fou-f\\Desktop\\MCE\\Second\\CienciaDeDat..."}</T>
        <Svg w={12} h={12} className="ml-auto mr-[4px] mt-[6px]"><path d="M9 0h2v2h-2zM5 4h2v2h-2zM9 4h2v2h-2zM1 8h2v2h-2zM5 8h2v2h-2zM9 8h2v2h-2z" fill="#b5b5b5" /></Svg>
      </div>
    </div>
  );
}

/* ---------- taskbar ---------- */
const Task = ({ w = 62, on, hi, wide, children }) => (
  <div className={"relative flex h-[50px] shrink-0 items-center justify-center " + (hi ? "bg-white/20" : "")} style={{ width: w }}>
    {children}
    {on && (
      <div className={"absolute bottom-0 flex h-[3px] " + (hi ? "inset-x-0" : "inset-x-[5px]")}>
        <div className="flex-1 bg-[#76b9ed]" />
        {wide && <div className="w-[11px] bg-[#5a8ab2]" />}
      </div>
    )}
  </div>
);

function Office({ c, l }) {
  return (
    <Svg w={28} h={28}>
      <path d="M14 4.500H27V23.500H14Z" fill="#fff" stroke={c} />
      <path d="M17 8.500H25M17 12H25M17 15.500H25M17 19H25" stroke={c} strokeWidth="1.600" />
      <path d="M0 3L17 0V28L0 25Z" fill={c} />
      <text x="8.500" y="19" fontSize="14" fontWeight="700" fill="#fff" textAnchor="middle" className="font-['Open_Sans',sans-serif]">{l}</text>
    </Svg>
  );
}

function Taskbar() {
  return (
    <div className="absolute inset-x-0 bottom-0 flex h-[50px] items-center bg-black/85 text-[14px] text-white">
      <Task w={59}><Svg w={21} h={21}><path d="M0 3L9 1.700V10H0ZM10 1.500L21 0V10H10ZM0 11H9V19.300L0 18ZM10 11H21V21L10 19.500Z" fill="#fff" /></Svg></Task>
      <Task w={61}><Svg w={21} h={21}><circle cx="13" cy="8" r="7" stroke="#fff" strokeWidth="1.400" /><path d="M8 13L1 20" stroke="#fff" strokeWidth="1.600" /></Svg></Task>
      <Task w={61}><Svg w={26} h={19}><path d="M5 0.700H21V18.300H5ZM3 3H0.700V16H3M23 3H25.300V16H23" stroke="#fff" strokeWidth="1.300" /></Svg></Task>
      <Task w={65} on wide>
        <Svg w={28} h={24}><path d="M0 1H10L13 3H28V22H0Z" fill="#fee08f" /><path d="M1 0H12V3H1Z" fill="#f5c242" /><path d="M5 12H23V24H18V17H10V24H5Z" fill="#3bb3e6" /></Svg>
      </Task>
      <Task w={61} on>
        <Svg w={28} h={28}>
          <circle cx="14" cy="14" r="14" fill="#fbc93d" />
          <path d="M14 0A14 14 0 0 1 26.100 7H14L8 18L1.900 7A14 14 0 0 1 14 0" fill="#db4437" />
          <path d="M1.900 7L8 17.500L14 20.500L13 28A14 14 0 0 1 1.900 7" fill="#1da462" />
          <circle cx="14" cy="14" r="6.500" fill="#fff" /><circle cx="14" cy="14" r="5" fill="#4c8bf5" />
        </Svg>
      </Task>
      <Task w={62} on>
        <Svg w={28} h={28}>
          <radialGradient id="rb" cx="0.5" cy="0.85" r="0.9"><stop offset="0" stopColor="#4cc0f0" /><stop offset="0.6" stopColor="#2065c8" /><stop offset="1" stopColor="#1a3fa0" /></radialGradient>
          <circle cx="14" cy="14" r="14" fill="url(#rb)" />
          <ellipse cx="14" cy="7" rx="10" ry="6" fill="#fff" opacity="0.35" />
          <text x="14" y="20" fontSize="18" fill="#fff" textAnchor="middle" className="font-['Liberation_Serif',serif]">R</text>
        </Svg>
      </Task>
      <Task w={62} on>
        <Svg w={30} h={30}><rect width="30" height="30" rx="2" fill="#4b4b4b" /><path d="M22 5.500V11L14 14L22 16.500V21L7 25V19.500L16 16.500L7 14V9.500Z" fill="#ff9800" /></Svg>
      </Task>
      <Task w={62}>
        <Svg w={30} h={24}><path d="M0 8L15 0L30 8V24H0Z" fill="#fff" /><path d="M2 9.500H28L17 15L25 20L13 15Z" fill="#050505" /></Svg>
      </Task>
      <Task w={61}>
        <Svg w={28} h={22}><path d="M0.500 0.500H27.500V21.500H0.500Z" fill="#0a0a0a" stroke="#9aa4aa" /><path d="M1 1H27V4H1Z" fill="#9aa4aa" /><path d="M4 6.500H7M9 6.500V8M11 8.500H16" stroke="#ddd" /></Svg>
      </Task>
      <Task w={64}>
        <Svg w={27} h={29}><path d="M0 3L12 0V13L0 14Z" fill="#d33" /><path d="M15 1L26 0V13L15 13Z" fill="#3aa932" /><path d="M1 17L12 16V28L2 29Z" fill="#c5bd25" /><path d="M15 16L26 15V26L15 28Z" fill="#5512b0" /></Svg>
      </Task>
      <Task w={62}>
        <Svg w={29} h={28}><path d="M20 0L29 4V24L20 28L17 26V5Z" fill="#865fc5" /><path d="M2 9L20 21V7L2 19Z" stroke="#865fc5" strokeWidth="2.600" /></Svg>
      </Task>
      <Task w={62} on>
        <Svg w={28} h={28}><path d="M1 1H27V27H1Z" fill="#2a0505" stroke="#e01b10" strokeWidth="2" /><path d="M6 21C10 20 14 13 14 7C14 5 12 6 13 8C14 12 18 17 22 17.500C23 16 14 15 6 21" stroke="#fff" strokeWidth="1.300" /></Svg>
      </Task>
      <Task w={62} on><Office c="#2b579a" l="W" /></Task>
      <Task w={62} on>
        <Svg w={28} h={28}><path d="M1 1H27V27H1Z" stroke="#fff" strokeWidth="1.500" /><path d="M2 21L10 10L16 18L20 14L27 22V27H2Z" fill="#fff" /></Svg>
      </Task>
      <Task w={62} on>
        <Svg w={28} h={26}><path d="M4 1L27 2L24 17L3 15Z" fill="#dfe7ec" /><path d="M7 3L24 4L22 14L6 13Z" fill="#9cc7e5" /><path d="M7 10L10 9L12 5L14 12L16 7L18 11L22 10" stroke="#fff" /><path d="M0 13H7V22H0Z" fill="#b6bcc0" /><ellipse cx="16" cy="22" rx="7" ry="3.500" fill="#cdd2d5" /></Svg>
      </Task>
      <Task w={61} on><Office c="#1e7145" l="X" /></Task>
      <Task w={61} on hi><Cube size={27} /></Task>
      <Task w={63} on>
        <Svg w={30} h={28}>
          <path d="M1 17C0 8 10 3 19 6C26 9 25 14 22 17C19 20 22 25 15 26C7 28 1 23 1 17" fill="#bfe0ee" />
          <circle cx="6" cy="16" r="2.300" fill="#d33" /><circle cx="10" cy="10.500" r="2.300" fill="#f19a2a" /><circle cx="16" cy="9.500" r="2.200" fill="#3ba64a" /><circle cx="8" cy="21.500" r="2.200" fill="#3a6fd0" />
          <path d="M26 6L18 26" stroke="#c9803a" strokeWidth="2.200" /><path d="M24 5C24 1 27 0 28 0C28 3 30 5 27 8Z" fill="#b5803f" />
        </Svg>
      </Task>
      <div className="ml-auto flex h-full items-center">
        <Svg w={18} h={19}><circle cx="12.500" cy="4" r="3.200" stroke="#fff" strokeWidth="1.300" /><path d="M9 10C11 7.500 16 7.500 17 12" stroke="#fff" strokeWidth="1.300" /><circle cx="6" cy="10" r="3" stroke="#fff" strokeWidth="1.300" /><path d="M1 18C2 12.500 10 12.500 11 18" stroke="#fff" strokeWidth="1.300" /></Svg>
        <Svg w={16} h={10} className="ml-[28px]"><path d="M1 9L8 1.500L15 9" stroke="#fff" strokeWidth="1.500" /></Svg>
        <Svg w={18} h={16} className="ml-[13px]"><path d="M5 0L9 3L5 6L1 3ZM13 0L17 3L13 6L9 3ZM5 6L9 9L5 12L1 9ZM13 6L17 9L13 12L9 9ZM9 10L13 13L9 16L5 13Z" fill="#fff" /></Svg>
        <Svg w={20} h={15} className="ml-[12px]"><path d="M5.500 3.500H17.500V13.500H5.500Z" stroke="#fff" strokeWidth="1.300" /><path d="M7 5H16V12H7ZM18 6H20V11H18Z" fill="#fff" /><path d="M1 0V3M4 0V3M0 3H5V6H0ZM2.500 6V9" stroke="#fff" /></Svg>
        <Svg w={16} h={16} className="ml-[12px]"><path d="M1 15C1 7 7 1 15 1M5 15C5 9 9 5 15 5M9 15C9 12 12 9 15 9" stroke="#bbb" strokeWidth="1.400" /><circle cx="14" cy="14" r="1.800" fill="#fff" /></Svg>
        <Svg w={20} h={16} className="ml-[12px]"><path d="M1 5.500H4L8 1.500V14.500L4 10.500H1Z" stroke="#fff" strokeWidth="1.200" /><path d="M11 5.500C12.500 7 12.500 9 11 10.500" stroke="#fff" strokeWidth="1.200" /><path d="M14 3.500C16 6 16 10 14 12.500M17 1.500C20 5 20 11 17 14.500" stroke="#777" strokeWidth="1.200" /></Svg>
        <T w={24} className="ml-[15px]">ESP</T>
        <div className="ml-[20px] flex w-[67px] flex-col items-center text-[14px] leading-[23px]">
          <T w={54}>4:06 AM</T>
          <T w={67}>2/11/2018</T>
        </div>
        <Svg w={32} h={30} className="ml-[22px] mt-[6px]">
          <path d="M0 0H19V15H9L5 19V15H0Z" fill="#fff" />
          <path d="M3 4.500H16M3 7.500H16M3 10.500H12" stroke="#111" />
          <circle cx="20" cy="19" r="9.500" fill="#2b2f33" stroke="#aaa" />
          <text x="20" y="24" fontSize="13" fill="#fff" textAnchor="middle" className="font-['Open_Sans',sans-serif]">1</text>
        </Svg>
        <div className="ml-[15px] mr-[4px] h-full w-px bg-[#556]" />
      </div>
    </div>
  );
}

export default function App() {
  return (
    <div className="relative h-[1080px] w-[1920px] overflow-hidden bg-[#00506b] font-['Open_Sans',sans-serif] leading-none">
      <Excel />
      <BarchartWindow />
      <ScatterWindow />
      <MatrixWindow />
      <GGobi />
      <Taskbar />
    </div>
  );
}
